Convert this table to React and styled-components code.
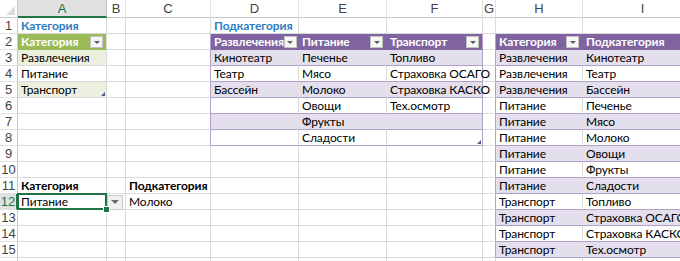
import React from 'react'
import styled, { createGlobalStyle } from 'styled-components'

const GRID = '#dadada'
const HEAD_LINE = '#c8c8c8'
const PURPLE = '#8064a2'
const PURPLE_BAND = '#e4dfec'
const PURPLE_LINE = '#b1a0c7'
const GREEN = '#9bbb59'
const GREEN_BAND = '#ebf1de'
const EXCEL_GREEN = '#217346'
const TITLE_BLUE = '#2b7cbf'

const COLUMNS = [
  { id: 'A', w: 89 },
  { id: 'B', w: 19 },
  { id: 'C', w: 85 },
  { id: 'D', w: 88 },
  { id: 'E', w: 88 },
  { id: 'F', w: 96 },
  { id: 'G', w: 13 },
  { id: 'H', w: 87 },
  { id: 'I', w: 120 },
]
const ROWS = Array.from({ length: 16 }, (_, i) => i + 1)

const DATA = {
  A1: 'Категория',
  D1: 'Подкатегория',
  A2: 'Категория',
  D2: 'Развлечения',
  E2: 'Питание',
  F2: 'Транспорт',
  H2: 'Категория',
  I2: 'Подкатегория',
  A3: 'Развлечения',
  A4: 'Питание',
  A5: 'Транспорт',
  D3: 'Кинотеатр',
  E3: 'Печенье',
  F3: 'Топливо',
  D4: 'Театр',
  E4: 'Мясо',
  F4: 'Страховка ОСАГО',
  D5: 'Бассейн',
  E5: 'Молоко',
  F5: 'Страховка КАСКО',
  E6: 'Овощи',
  F6: 'Тех.осмотр',
  E7: 'Фрукты',
  E8: 'Сладости',
  A11: 'Категория',
  C11: 'Подкатегория',
  A12: 'Питание',
  C12: 'Молоко',
}
const BOLD = ['A1', 'D1', 'A11', 'C11']
const TITLES = ['A1', 'D1']

const LIST = [
  ['Развлечения', 'Кинотеатр'],
  ['Развлечения', 'Театр'],
  ['Развлечения', 'Бассейн'],
  ['Питание', 'Печенье'],
  ['Питание', 'Мясо'],
  ['Питание', 'Молоко'],
  ['Питание', 'Овощи'],
  ['Питание', 'Фрукты'],
  ['Питание', 'Сладости'],
  ['Транспорт', 'Топливо'],
  ['Транспорт', 'Страховка ОСАГО'],
  ['Транспорт', 'Страховка КАСКО'],
  ['Транспорт', 'Тех.осмотр'],
]
LIST.forEach(([h, i], n) => {
  DATA['H' + (n + 3)] = h
  DATA['I' + (n + 3)] = i
})

const TABLES = [
  { cols: ['A'], from: 2, to: 5, hdr: GREEN, band: GREEN_BAND, line: null },
  { cols: ['D', 'E', 'F'], from: 2, to: 8, hdr: PURPLE, band: PURPLE_BAND, line: PURPLE_LINE },
  { cols: ['H', 'I'], from: 2, to: 15, hdr: PURPLE, band: PURPLE_BAND, line: PURPLE_LINE },
]

const findTable = (col, row) =>
  TABLES.find((t) => t.cols.includes(col) && row >= t.from && row <= t.to)

const colLeftOfTable = (col, row) =>
  TABLES.find((t) => {
    if (!t.line || row < t.from || row > t.to) return false
    const idx = COLUMNS.findIndex((c) => c.id === t.cols[0])
    return COLUMNS[idx - 1] && COLUMNS[idx - 1].id === col
  })

function cellLook(col, row) {
  const key = col + row
  const look = { fill: 'transparent', br: GRID, bb: GRID, color: '#000', weight: 400 }
  if (TITLES.includes(key)) look.color = TITLE_BLUE
  if (BOLD.includes(key)) look.weight = 700
  const t = findTable(col, row)
  if (colLeftOfTable(col, row)) look.br = PURPLE_LINE
  if (!t) return look
  const last = t.cols[t.cols.length - 1] === col
  if (row === t.from) {
    look.header = true
    look.fill = t.hdr
    look.color = '#fff'
    look.weight = 700
    look.br = last ? t.line || GRID : t.hdr
    look.bb = t.hdr
    return look
  }
  const banded = (row - t.from) % 2 === 1
  if (banded) look.fill = t.band
  if (t.line) {
    look.bb = t.line
    look.br = last ? t.line : banded ? t.band : GRID
  }
  if (row === t.to && last) look.handle = true
  return look
}

const GlobalStyle = createGlobalStyle`
  html, body {
    margin: 0;
    padding: 0;
    background: #fff;
  }
  body {
    font-family: Lato, 'Liberation Sans', sans-serif;
  }
`

const Viewport = styled.div`
  width: 680px;
  height: 261px;
  overflow: hidden;
  background: #fff;
`

const Sheet = styled.div`
  display: grid;
  grid-template-columns: 18px ${COLUMNS.map((c) => c.w + 'px').join(' ')};
  grid-template-rows: 18px repeat(16, 16px);
  width: max-content;
`

const Corner = styled.div`
  position: relative;
  box-sizing: border-box;
  background: #fff;
  border-right: 1px solid ${HEAD_LINE};
  border-bottom: 1px solid ${HEAD_LINE};
  &::after {
    content: '';
    position: absolute;
    right: 2px;
    bottom: 2px;
    border-left: 9px solid transparent;
    border-bottom: 9px solid #dcdcdc;
  }
`

const ColHead = styled.div`
  box-sizing: border-box;
  display: flex;
  align-items: center;
  justify-content: center;
  background: ${(p) => (p.$active ? '#e1e1e1' : '#fff')};
  color: ${(p) => (p.$active ? EXCEL_GREEN : '#444')};
  border-right: 1px solid ${(p) => (p.$active ? '#bdbdbd' : '#e1e1e1')};
  border-bottom: ${(p) => (p.$active ? `2px solid ${EXCEL_GREEN}` : `1px solid ${HEAD_LINE}`)};
  font-family: 'Liberation Sans', Arial, sans-serif;
  font-size: 13px;
`

const RowHead = styled.div`
  box-sizing: border-box;
  display: flex;
  align-items: center;
  justify-content: center;
  background: ${(p) => (p.$active ? '#e1e1e1' : '#fff')};
  color: ${(p) => (p.$active ? EXCEL_GREEN : '#444')};
  border-right: ${(p) => (p.$active ? `2px solid ${EXCEL_GREEN}` : `1px solid ${HEAD_LINE}`)};
  border-bottom: 1px solid #e1e1e1;
  font-family: 'Liberation Sans', Arial, sans-serif;
  font-size: 13px;
`

const Cell = styled.div`
  position: ${(p) => (p.$handle || p.$selected ? 'relative' : 'static')};
  z-index: ${(p) => (p.$selected ? 2 : 'auto')};
  box-sizing: border-box;
  display: flex;
  align-items: center;
  min-width: 0;
  padding: 1px 2px 0 3px;
  background: ${(p) => p.$fill};
  border-right: 1px solid ${(p) => p.$br};
  border-bottom: 1px solid ${(p) => p.$bb};
  color: ${(p) => p.$color};
  font-weight: ${(p) => p.$weight};
  font-size: 12px;
  letter-spacing: -0.1px;
  line-height: 14px;
  white-space: nowrap;

  ${(p) =>
    p.$handle &&
    `&::after {
      content: '';
      position: absolute;
      right: 1px;
      bottom: 1px;
      border-left: 4px solid transparent;
      border-bottom: 4px solid #4c5b8e;
    }`}

  ${(p) =>
    p.$selected &&
    `&::before {
      content: '';
      position: absolute;
      left: -1px;
      top: -1px;
      right: -1px;
      bottom: -1px;
      border: 2px solid ${EXCEL_GREEN};
      pointer-events: none;
    }
    &::after {
      content: '';
      position: absolute;
      right: -4px;
      bottom: -4px;
      width: 5px;
      height: 5px;
      background: ${EXCEL_GREEN};
      border: 1px solid #fff;
    }`}
`

const Label = styled.span`
  overflow: visible;
`

const FilterButton = styled.span`
  flex: none;
  margin-left: auto;
  margin-right: 1px;
  width: 13px;
  height: 12px;
  box-sizing: border-box;
  display: flex;
  align-items: center;
  justify-content: center;
  background: #f7f7f7;
  border: 1px solid #c4c4c4;
  &::after {
    content: '';
    border-left: 3px solid transparent;
    border-right: 3px solid transparent;
    border-top: 3px solid #5f5f5f;
  }
`

const ListButton = styled.span`
  flex: none;
  margin-left: -3px;
  width: 16px;
  height: 15px;
  box-sizing: border-box;
  display: flex;
  align-items: center;
  justify-content: center;
  background: #f0f0f0;
  border: 1px solid #c8c8c8;
  &::after {
    content: '';
    border-left: 4px solid transparent;
    border-right: 4px solid transparent;
    border-top: 4px solid #6a6a6a;
  }
`

const SELECTED = 'A12'

function SheetCell({ col, row }) {
  const key = col + row
  const look = cellLook(col, row)
  return (
    <Cell
      $fill={look.fill}
      $br={look.br}
      $bb={look.bb}
      $color={look.color}
      $weight={look.weight}
      $handle={look.handle}
      $selected={key === SELECTED}
    >
      {DATA[key] && <Label>{DATA[key]}</Label>}
      {look.header && <FilterButton />}
      {key === 'B12' && <ListButton />}
    </Cell>
  )
}

export default function App() {
  return (
    <Viewport>
      <GlobalStyle />
      <Sheet>
        <Corner />
        {COLUMNS.map((c) => (
          <ColHead key={c.id} $active={c.id === 'A'}>
            {c.id}
          </ColHead>
        ))}
        {ROWS.map((r) => (
          <React.Fragment key={r}>
            <RowHead $active={r === 12}>{r}</RowHead>
            {COLUMNS.map((c) => (
              <SheetCell key={c.id + r} col={c.id} row={r} />
            ))}
          </React.Fragment>
        ))}
      </Sheet>
    </Viewport>
  )
}
